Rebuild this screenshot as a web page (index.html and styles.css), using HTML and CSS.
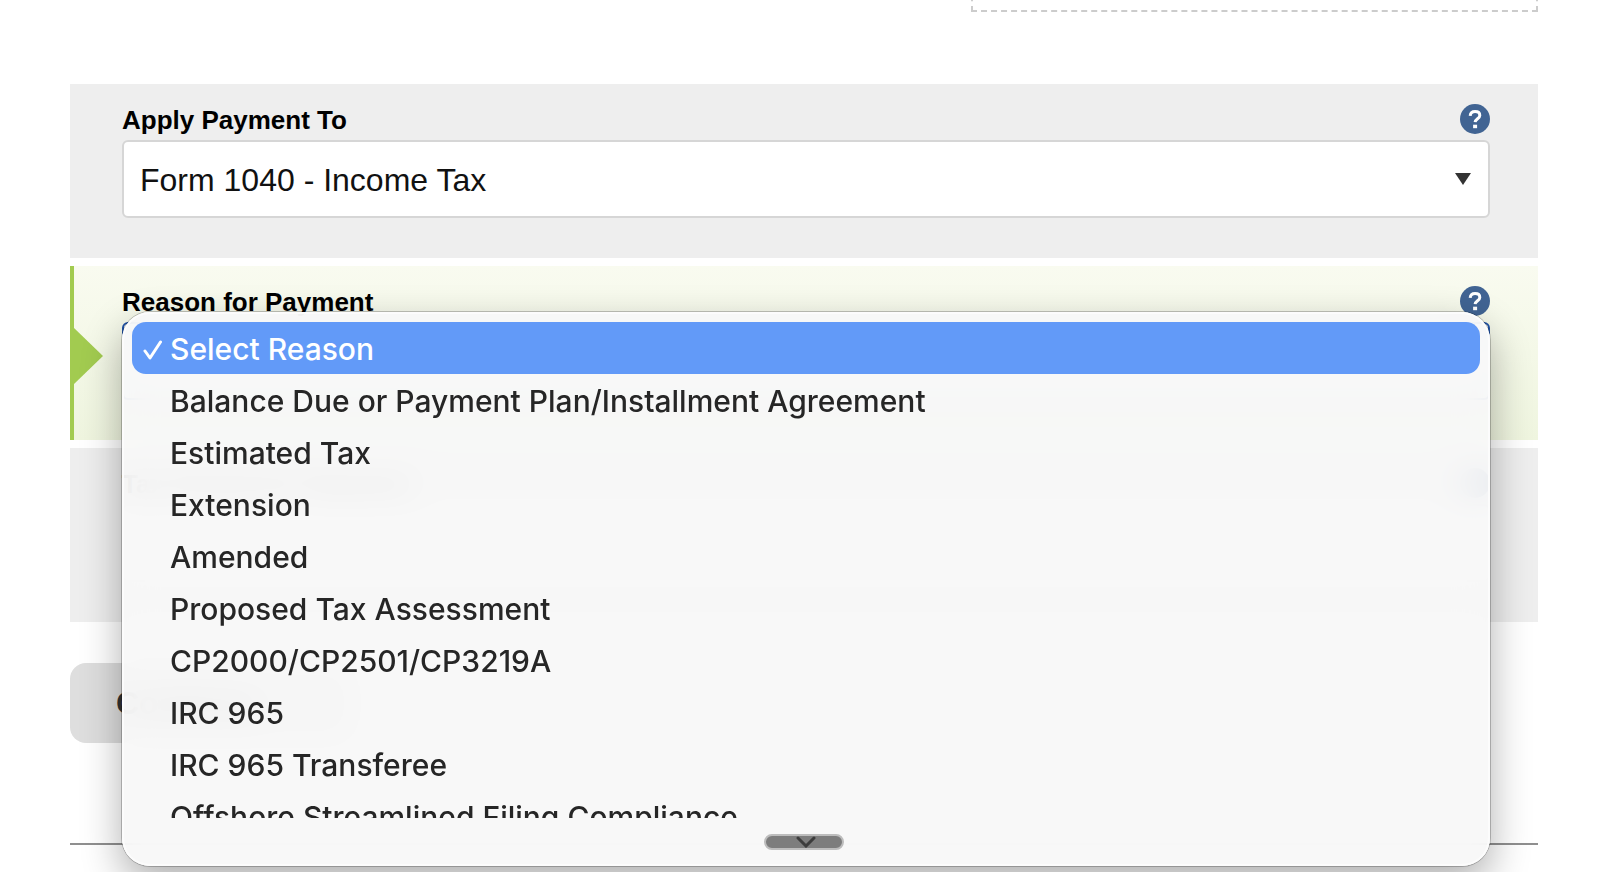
FILE: index.html
```html
<!DOCTYPE html>
<html lang="en">
<head>
<meta charset="utf-8">
<title>Payment Reason</title>
<link rel="stylesheet" href="styles.css">
</head>
<body>
<main class="page">
  <div class="intro"><div class="note"></div></div>

  <form class="form">
    <section class="panel">
      <div class="panel-head">
        <label for="apply">Apply Payment To</label>
        <button type="button" class="help" aria-label="Help: Apply Payment To">
          <svg viewBox="0 0 30 30"><path d="M10.2 11.8c.2-2.700 2.200-4.200 4.900-4.200 2.800 0 4.700 1.500 4.700 3.900 0 3-4.500 3.500-4.700 6.700"/><rect x="13.100" y="20.700" width="4" height="3.500"/></svg>
        </button>
      </div>
      <div class="field">
        <select id="apply"><option>Form 1040 - Income Tax</option></select>
        <svg class="caret" viewBox="0 0 16 12"><path d="M0 0h16L8 12z"/></svg>
      </div>
    </section>

    <section class="panel panel-active">
      <div class="panel-head">
        <label for="reason">Reason for Payment</label>
        <button type="button" class="help" aria-label="Help: Reason for Payment">
          <svg viewBox="0 0 30 30"><path d="M10.2 11.8c.2-2.700 2.200-4.200 4.900-4.200 2.800 0 4.700 1.500 4.700 3.900 0 3-4.500 3.500-4.700 6.700"/><rect x="13.100" y="20.700" width="4" height="3.500"/></svg>
        </button>
      </div>
      <div class="field">
        <select id="reason" class="focused"><option></option></select>
        <div class="popup">
          <div class="options" role="listbox" aria-label="Reason for Payment">
            <button type="button" role="option" aria-selected="true" class="option selected"><svg class="check" viewBox="0 0 20 20"><path d="M2 11l5 7L17.500 2"/></svg>Select Reason</button>
            <button type="button" role="option" class="option">Balance Due or Payment Plan/Installment Agreement</button>
            <button type="button" role="option" class="option">Estimated Tax</button>
            <button type="button" role="option" class="option">Extension</button>
            <button type="button" role="option" class="option">Amended</button>
            <button type="button" role="option" class="option">Proposed Tax Assessment</button>
            <button type="button" role="option" class="option">CP2000/CP2501/CP3219A</button>
            <button type="button" role="option" class="option">IRC 965</button>
            <button type="button" role="option" class="option">IRC 965 Transferee</button>
            <button type="button" role="option" class="option">Offshore Streamlined Filing Compliance</button>
          </div>
          <button type="button" class="more" aria-label="Scroll down">
            <svg viewBox="0 0 20 12"><path d="M2 2l8 8 8-8"/></svg>
          </button>
        </div>
      </div>
    </section>

    <section class="panel">
      <div class="panel-head">
        <label for="period">Tax Period for Payment</label>
        <button type="button" class="help" aria-label="Help"></button>
      </div>
      <div class="field">
        <select id="period"><option></option></select>
      </div>
    </section>

    <button type="button" class="continue">Continue</button>
  </form>
  <footer class="footer"></footer>
</main>
</body>
</html>
```
FILE: styles.css
```css
* { box-sizing: border-box; }

body {
  margin: 0;
  height: 100vh;
  overflow: hidden;
  background: #fff;
  color: #000;
  font-family: "Liberation Sans", Arial, sans-serif;
}

button { font: inherit; border: 0; padding: 0; margin: 0; }

.page {
  display: flex;
  flex-direction: column;
  padding: 0 76px 0 70px;
}

.intro {
  display: grid;
  grid-template-columns: 901fr 567fr;
  margin-bottom: 72px;
}

.note {
  grid-column: 2;
  height: 60px;
  margin-top: -48px;
  border: 2px dashed #ccc;
}

.form {
  display: flex;
  flex-direction: column;
  gap: 8px;
}

.panel {
  display: flex;
  flex-direction: column;
  gap: 6px;
  padding: 20px 48px 40px 52px;
  background: #eee;
}

.panel-active {
  position: relative;
  z-index: 1;
  border-left: 4px solid #a2cb50;
  padding-left: 48px;
  background: linear-gradient(#f9fbf0, #eff5df);
}

.panel-active::before {
  content: "";
  position: absolute;
  left: 0;
  top: 62px;
  border: solid transparent;
  border-width: 28px 0 28px 29px;
  border-left-color: #a2cb50;
}

.panel-head {
  display: flex;
  justify-content: space-between;
  font-size: 26px;
  font-weight: bold;
  line-height: 32px;
  height: 30px;
}

.help {
  width: 30px;
  height: 30px;
  border-radius: 50%;
  background: #416493;
}

.help svg { display: block; }
.help path { fill: none; stroke: #fff; stroke-width: 3; }
.help rect { fill: #fff; }

.field {
  position: relative;
  display: grid;
}

select {
  appearance: none;
  width: 100%;
  height: 78px;
  padding: 2px 16px 0;
  border: 2px solid #d6d6d6;
  border-radius: 6px;
  background: #fff;
  color: #111;
  font: 32px "Liberation Sans", Arial, sans-serif;
}

.focused { border-color: #1f51a6; }

.caret {
  position: absolute;
  right: 19px;
  top: 33px;
  width: 16px;
  height: 12px;
  fill: #333;
}

.popup {
  position: absolute;
  top: -10px;
  left: 0;
  right: 0;
  display: flex;
  flex-direction: column;
  padding: 10px 10px 16px;
  border-radius: 28px;
  background: rgba(248, 248, 248, 0.93);
  backdrop-filter: blur(16px);
  box-shadow: inset 0 0 0 2px #fcfcfc, 0 0 0 1px rgba(0, 0, 0, 0.22), 0 16px 40px rgba(0, 0, 0, 0.32);
}

.options {
  display: flex;
  flex-direction: column;
  height: 496px;
  overflow: hidden;
}

.option {
  position: relative;
  flex: none;
  height: 52px;
  padding: 2px 0 0 38px;
  border-radius: 14px;
  background: none;
  color: #262626;
  font: 500 30px/50px Inter, sans-serif;
  text-align: left;
  white-space: nowrap;
}

.selected { background: #629af8; color: #fff; }

.check {
  position: absolute;
  left: 11px;
  top: 18px;
  width: 20px;
  height: 20px;
  fill: none;
  stroke: #fff;
  stroke-width: 3;
  stroke-linecap: round;
  stroke-linejoin: round;
}

.more {
  display: flex;
  justify-content: center;
  align-items: center;
  align-self: center;
  width: 80px;
  height: 16px;
  margin: 16px 4px 0 0;
  border: 2px solid #bdbdbd;
  border-radius: 8px;
  background: #7d7d7d;
}

.more svg {
  width: 20px;
  height: 12px;
  margin-left: 4px;
  fill: none;
  stroke: #3c3c3c;
  stroke-width: 3;
  stroke-linecap: round;
}

.continue {
  align-self: flex-start;
  width: 286px;
  height: 80px;
  margin-top: 33px;
  padding-left: 46px;
  border-radius: 16px;
  background: #dedede;
  color: #333;
  font-size: 32px;
  font-weight: bold;
  text-align: left;
}

.footer {
  height: 60px;
  margin-top: 100px;
  border-top: 2px solid #8f8f8f;
}
```
